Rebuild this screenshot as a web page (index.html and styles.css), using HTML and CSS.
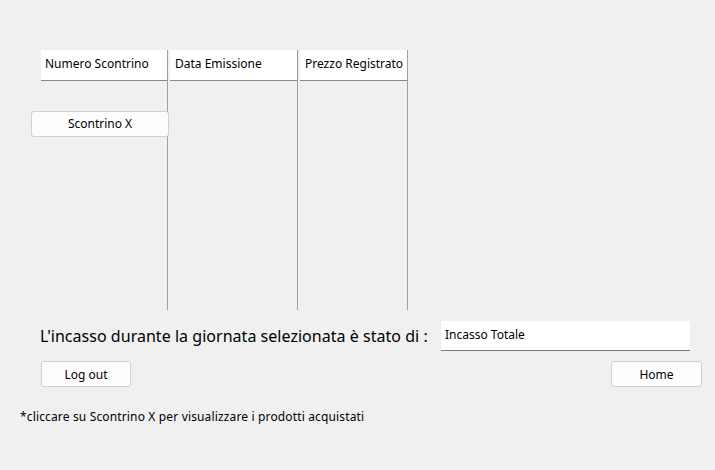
FILE: index.html
```html
<!DOCTYPE html>
<html>
<head>
<meta charset="utf-8">
<link rel="stylesheet" href="styles.css">
</head>
<body>
<div class="window">
  <div class="table">
    <div class="col col1">
      <div class="head">Numero Scontrino</div>
      <button class="btn receipt">Scontrino X</button>
    </div>
    <div class="col col2">
      <div class="head">Data Emissione</div>
    </div>
    <div class="col col3">
      <div class="head">Prezzo Registrato</div>
    </div>
  </div>
  <div class="total-row">
    <div class="total-label">L'incasso durante la giornata selezionata è stato di :</div>
    <div class="total-field">Incasso Totale</div>
  </div>
  <div class="button-row">
    <button class="btn nav">Log out</button>
    <button class="btn nav home">Home</button>
  </div>
  <div class="note">*cliccare su Scontrino X per visualizzare i prodotti acquistati</div>
</div>
</body>
</html>
```
FILE: styles.css
```css
html, body {
  margin: 0;
  padding: 0;
  background: #f0f0f0;
}
body {
  font-family: "Noto Sans", "Open Sans", sans-serif;
  font-size: 12px;
  color: #000;
}
.window {
  width: 715px;
  height: 470px;
  box-sizing: border-box;
  padding-top: 50px;
  display: flex;
  flex-direction: column;
}
.table {
  display: flex;
  gap: 2px;
  margin-left: 41px;
  height: 260px;
}
.col {
  border-right: 1px solid #a0a0a0;
  display: flex;
  flex-direction: column;
  align-items: flex-start;
}
.col1 { width: 126px; }
.col2 { width: 127px; }
.col3 { width: 107px; }
.head {
  align-self: stretch;
  background: #fff;
  border-bottom: 1px solid #8a8a8a;
  display: flex;
  align-items: center;
  padding-left: 4px;
  padding-bottom: 3px;
  box-sizing: border-box;
  height: 31px;
  white-space: nowrap;
}
.col2 .head,
.col3 .head {
  padding-left: 5px;
}
.btn {
  font-family: inherit;
  font-size: 12px;
  color: #000;
  background: #fdfdfd;
  border: 1px solid #d0d0d0;
  border-radius: 3px;
  box-sizing: border-box;
  padding: 0 0 1px;
  height: 26px;
}
.receipt {
  margin-top: 30px;
  margin-left: -10px;
  width: 138px;
}
.total-row {
  display: flex;
  align-items: center;
  margin-top: 11px;
  height: 30px;
}
.total-label {
  margin-left: 40px;
  font-size: 16px;
  width: 401px;
  white-space: nowrap;
  letter-spacing: 0.03px;
}
.total-field {
  width: 249px;
  height: 30px;
  box-sizing: border-box;
  background: #fff;
  border-bottom: 1px solid #7a7a7a;
  padding-left: 4px;
  padding-bottom: 3px;
  display: flex;
  align-items: center;
}
.button-row {
  display: flex;
  justify-content: space-between;
  margin-top: 10px;
  padding-left: 41px;
  padding-right: 13px;
}
.nav {
  width: 90px;
  padding: 0;
}
.home {
  width: 91px;
}
.note {
  margin-top: 22px;
  margin-left: 20px;
  line-height: 16px;
  letter-spacing: 0.15px;
}
```
